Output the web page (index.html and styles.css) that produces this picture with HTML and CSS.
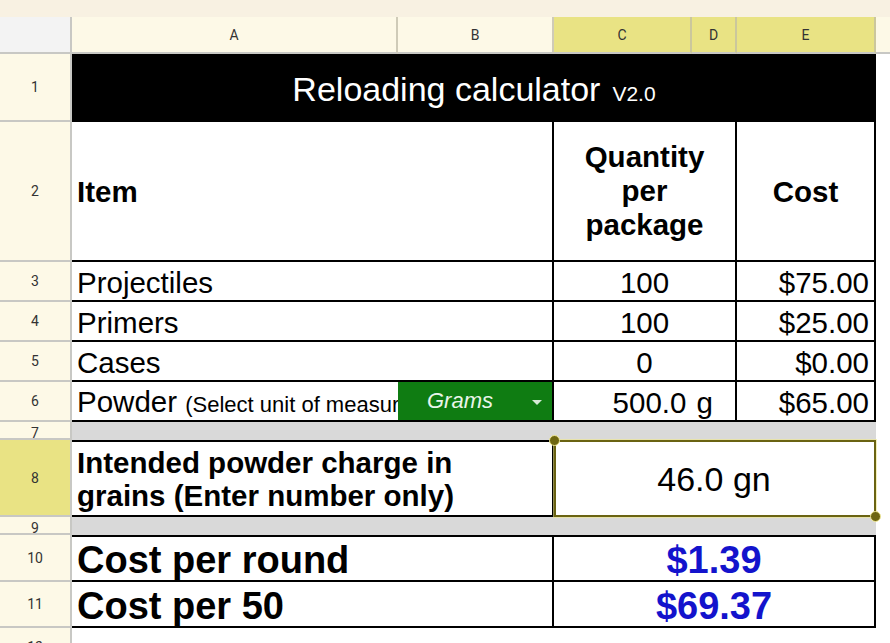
FILE: index.html
```html
<!DOCTYPE html>
<html>
<head>
<meta charset="utf-8">
<link rel="stylesheet" href="styles.css">
</head>
<body>
<div class="topbar"></div>
<div class="sheet">
  <!-- header row -->
  <div class="corner"></div>
  <div class="colh">A</div>
  <div class="colh">B</div>
  <div class="colh sel">C</div>
  <div class="colh sel">D</div>
  <div class="colh sel">E</div>
  <div class="colh fill"></div>

  <!-- row 1 -->
  <div class="rowh">1</div>
  <div class="c title span5"><span>Reloading calculator<small class="ver">V2.0</small></span></div>
  <div class="pad"></div>

  <!-- row 2 -->
  <div class="rowh">2</div>
  <div class="c span2 bb br bold mid">Item</div>
  <div class="c span2 bb br bold center wrap">Quantity<br>per<br>package</div>
  <div class="c bb br bold center mid">Cost</div>
  <div class="pad"></div>

  <!-- row 3 -->
  <div class="rowh">3</div>
  <div class="c span2 bb br">Projectiles</div>
  <div class="c span2 bb br center">100</div>
  <div class="c bb br right">$75.00</div>
  <div class="pad"></div>

  <!-- row 4 -->
  <div class="rowh">4</div>
  <div class="c span2 bb br">Primers</div>
  <div class="c span2 bb br center">100</div>
  <div class="c bb br right">$25.00</div>
  <div class="pad"></div>

  <!-- row 5 -->
  <div class="rowh">5</div>
  <div class="c span2 bb br">Cases</div>
  <div class="c span2 bb br center">0</div>
  <div class="c bb br right">$0.00</div>
  <div class="pad"></div>

  <!-- row 6 -->
  <div class="rowh">6</div>
  <div class="c bb powder"><span class="p-label">Powder&nbsp;</span><span class="note">(Select unit of measurement)</span></div>
  <div class="c bb br dd"><span class="dd-text">Grams</span><span class="arrow"></span></div>
  <div class="c span2 bb br right qty">500.0 g</div>
  <div class="c bb br right">$65.00</div>
  <div class="pad"></div>

  <!-- row 7 -->
  <div class="rowh short">7</div>
  <div class="gray span5"></div>
  <div class="pad"></div>

  <!-- row 8 -->
  <div class="rowh sel">8</div>
  <div class="c span2 bt bb br bold wrap charge">Intended powder charge in<br>grains (Enter number only)</div>
  <div class="c span3 bt bb br center selcell">46.0 gn<div class="selbox"><span class="handle tl"></span><span class="handle br-h"></span></div></div>
  <div class="pad"></div>

  <!-- row 9 -->
  <div class="rowh short">9</div>
  <div class="gray span5"></div>
  <div class="pad"></div>

  <!-- row 10 -->
  <div class="rowh">10</div>
  <div class="c span2 bt bb br bold big">Cost per round</div>
  <div class="c span3 bt bb br bold big center blue">$1.39</div>
  <div class="pad"></div>

  <!-- row 11 -->
  <div class="rowh">11</div>
  <div class="c span2 bb br bold big">Cost per 50</div>
  <div class="c span3 bb br bold big center blue">$69.37</div>
  <div class="pad"></div>

  <!-- row 12 -->
  <div class="rowh last">12</div>
  <div class="span5"></div>
  <div class="pad"></div>
</div>
</body>
</html>
```

FILE: styles.css
```css
* {
  box-sizing: border-box;
  margin: 0;
  padding: 0;
}

html, body {
  width: 890px;
  height: 643px;
  overflow: hidden;
  background: #ffffff;
}

body {
  font-family: "Liberation Sans", Arial, sans-serif;
}

.topbar {
  height: 17px;
  background: #f8f1e2;
}

.sheet {
  display: grid;
  grid-template-columns: 72px 326px 156px 138px 45px 139px 1fr;
  grid-template-rows: 37px 68px 140px 40px 40px 40px 40px 18px 77px 18px 47px 46px 30px;
}

.corner {
  background: #f3f3f3;
  border-right: 2px solid #c8c8c4;
  border-bottom: 2px solid #c8c8c4;
}

.colh {
  background: #fdf9e7;
  border-right: 2px solid #cfcbb8;
  border-bottom: 2px solid #c8c8c4;
  font-family: Roboto, "Liberation Sans", sans-serif;
  font-size: 14px;
  color: #333333;
  display: flex;
  align-items: center;
  justify-content: center;
}

.colh.sel {
  background: #e9e384;
  border-right-color: #cbc79c;
}

.colh.fill {
  border-right: none;
}

.rowh {
  background: #fdf9e7;
  border-right: 2px solid #c8c8c4;
  border-bottom: 2px solid #c8c8c4;
  font-family: Roboto, "Liberation Sans", sans-serif;
  font-size: 14px;
  color: #333333;
  display: flex;
  align-items: center;
  justify-content: center;
  overflow: hidden;
}

.rowh.sel {
  background: #e9e384;
}

.rowh.short {
  align-items: flex-start;
  padding-top: 4px;
  line-height: 14px;
}

.rowh.last {
  align-items: flex-start;
  padding-top: 12px;
  line-height: 14px;
}

.pad {
  background: #ffffff;
}

.span2 { grid-column: span 2; }
.span3 { grid-column: span 3; }
.span5 { grid-column: span 5; }

.c {
  display: flex;
  align-items: center;
  overflow: hidden;
  white-space: nowrap;
  font-size: 29.5px;
  color: #000000;
  padding: 4px 5px 0;
  background: #ffffff;
}

.bb { border-bottom: 2px solid #000000; }
.br { border-right: 2px solid #000000; }
.bt { border-top: 2px solid #000000; }

.bold { font-weight: bold; }

.mid {
  padding-top: 1px;
}

.center {
  justify-content: center;
  text-align: center;
}

.right {
  justify-content: flex-end;
  padding-right: 5px;
}

.wrap {
  white-space: normal;
  line-height: 34px;
  padding-top: 0;
}

.charge {
  line-height: 33px;
}

.title {
  background: #000000;
  color: #ffffff;
  font-size: 34px;
  justify-content: center;
  padding-top: 2px;
}

.ver {
  font-size: 21px;
  margin-left: 12px;
}

.powder {
  align-items: baseline;
  padding-top: 3px;
  padding-right: 0;
}

.p-label {
  flex: none;
}

.note {
  flex: 1;
  min-width: 0;
  overflow: hidden;
  white-space: nowrap;
  font-size: 22px;
}

.dd {
  background: #0f7c12;
  padding: 0;
}

.dd-text {
  flex: 1;
  text-align: center;
  font-size: 22px;
  font-style: italic;
  color: #eaf5ea;
}

.arrow {
  width: 0;
  height: 0;
  margin: 2px 10px 0 10px;
  border-left: 5px solid transparent;
  border-right: 5px solid transparent;
  border-top: 5px solid #d6ead6;
}

.qty {
  padding-right: 22px;
  word-spacing: 2px;
}

.gray {
  background: #d9d9d9;
}

.selcell {
  position: relative;
  overflow: visible;
  font-size: 34px;
  padding-top: 1px;
}

.selbox {
  position: absolute;
  top: -2px;
  right: -2px;
  bottom: -2px;
  left: 0;
  border: 2px solid #6a6312;
  box-shadow: 0 0 0 1px rgba(240, 232, 140, 0.6);
  z-index: 3;
}

.handle {
  position: absolute;
  width: 11px;
  height: 11px;
  border-radius: 50%;
  background: #6e6612;
  border: 1px solid #f2ea9a;
}

.handle.tl {
  top: -7px;
  left: -7px;
}

.handle.br-h {
  bottom: -7px;
  right: -7px;
}

.big {
  font-size: 38px;
  line-height: 1;
  padding-top: 3px;
}

.blue {
  color: #1313cc;
}
```
